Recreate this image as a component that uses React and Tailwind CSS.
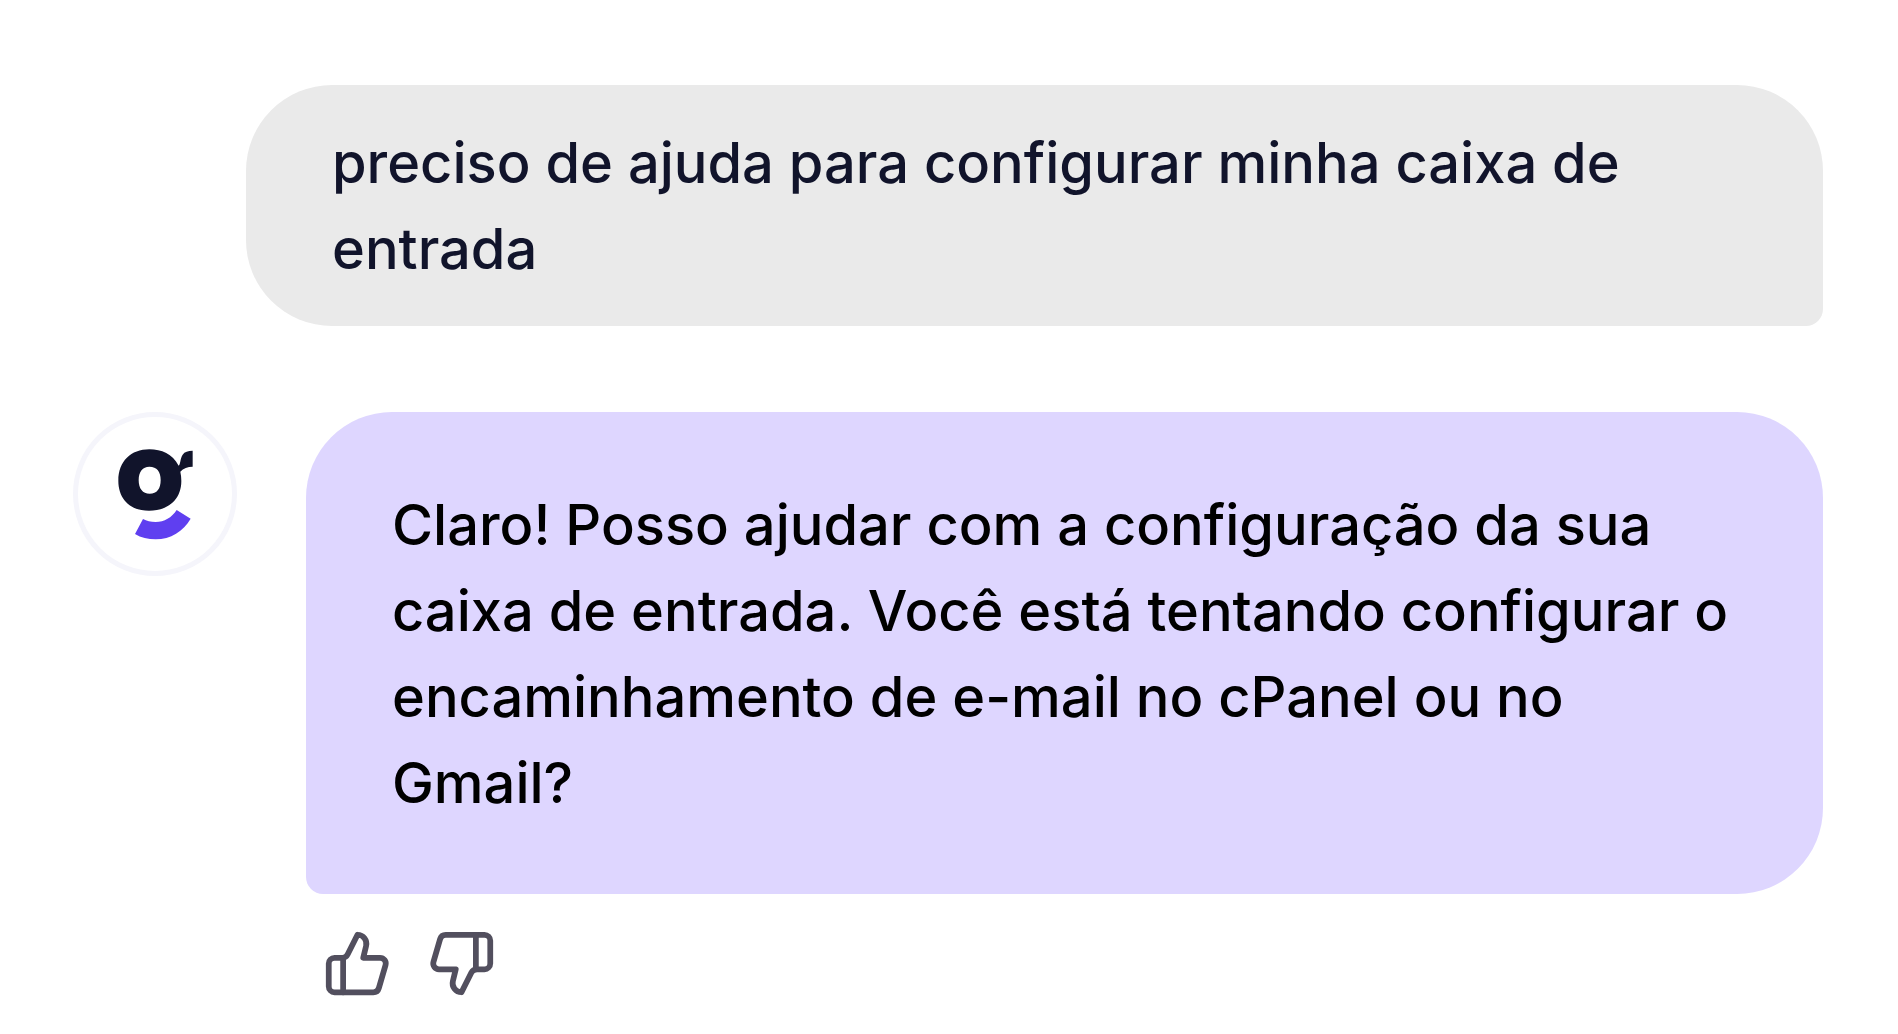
import React from "react";
import { ThumbsUp, ThumbsDown } from "lucide-react";

function BotAvatar() {
	return (
		<div className="flex size-41 shrink-0 items-center justify-center rounded-full border-[5px] border-[#f5f5fb] bg-white">
			<svg viewBox="174 145 225 273" className="h-[91px] w-[75px]" role="img" aria-label="g">
				<path
					fill="#11142b"
					fillRule="evenodd"
					d="M268 146C305 146 337 160 356 195C362 190 360 174 368 162C374 153 384 150 398 150V198C383 198 370 203 361 213C363 222 364 232 364 241C364 296 325 330 267 330C210 330 175 295 175 240C175 182 213 146 268 146ZM268 198C248 198 236 213 236 238C236 264 248 279 269 279C291 279 302 264 302 238C302 213 291 198 268 198Z"
				/>
				<path
					fill="#5f3ff0"
					d="M350 328L392 354C370 392 332 416 287 416C264 416 243 411 225 400L249 355C260 361 272 364 287 364C313 364 335 351 350 328Z"
				/>
			</svg>
		</div>
	);
}

function App() {
	return (
		<main className="flex flex-col bg-white pt-[85px] pr-[75px] pl-[73px] font-[Inter,sans-serif] text-[56px] leading-[86px] font-[450]">
			<div className="ml-[173px] rounded-[86px] rounded-br-[17px] bg-[#eaeaea] px-[86px] pt-[35px] pb-[34px] text-[#11142b]">
				<p>preciso de ajuda para configurar minha caixa de entrada</p>
			</div>

			<div className="mt-[86px] flex items-start gap-[69px]">
				<BotAvatar />
				<div className="flex-1">
					<div className="rounded-[86px] rounded-bl-[17px] bg-[#ded6ff] px-[86px] pt-[70px] pb-[68px] text-black">
						<p>
							Claro! Posso ajudar com a configuração da sua caixa de entrada. Você está tentando
							configurar o encaminhamento de e-mail no cPanel ou no Gmail?
						</p>
					</div>
					<div className="mt-[35px] flex gap-[35px] pl-[17px] text-[#524f5e]">
						<button type="button" aria-label="Gostei">
							<ThumbsUp className="size-[69px]" />
						</button>
						<button type="button" aria-label="Não gostei">
							<ThumbsDown className="size-[69px]" />
						</button>
					</div>
				</div>
			</div>
		</main>
	);
}

export default App;
